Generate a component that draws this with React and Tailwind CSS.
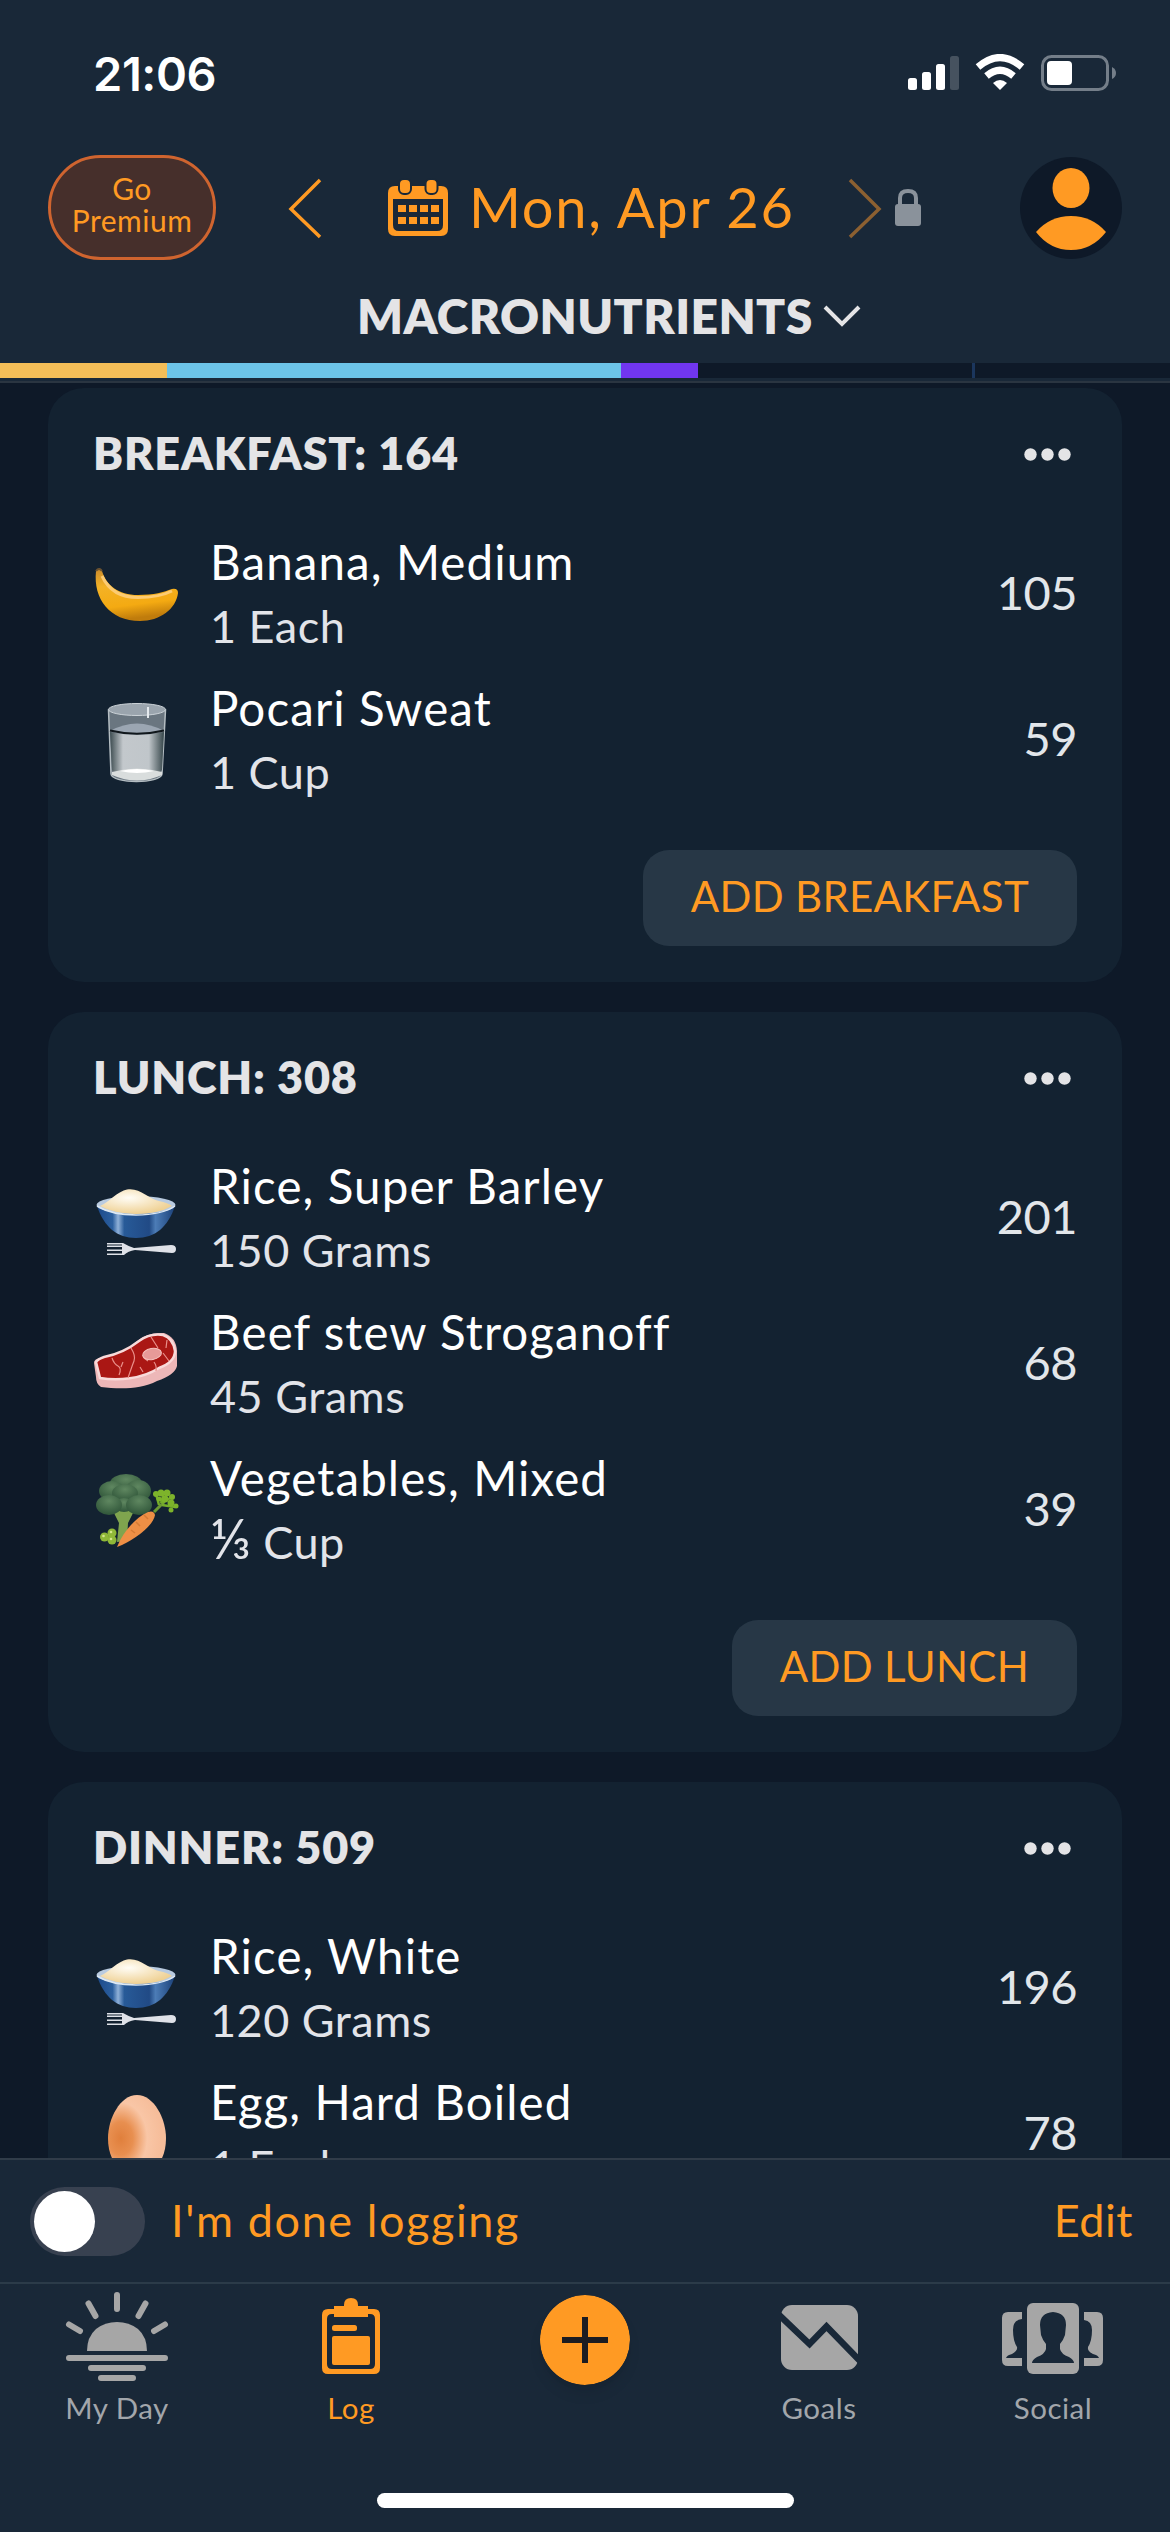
import React from "react";

const Banana = () => (
  <svg width="90" height="90" viewBox="0 0 90 90">
    <defs>
      <linearGradient id="banana" x1="0" y1="0" x2="0.2" y2="1">
        <stop offset="0" stopColor="#c98a2c" />
        <stop offset="0.35" stopColor="#f3b226" />
        <stop offset="0.75" stopColor="#f4aa12" />
        <stop offset="1" stopColor="#c07c0c" />
      </linearGradient>
    </defs>
    <path
      d="M4 22 Q8 17 10 22 C14 36 26 46 46 46 C62 46 72 43 80 40 Q86 39 86 44 C84 60 68 72 48 72 C18 72 1 50 4 22 Z"
      fill="url(#banana)"
    />
    <path
      d="M10 27 C16 40 27 48.500 46 48.500 C60 48.500 72 46 80 42"
      fill="none"
      stroke="#fccb72"
      strokeWidth="3"
    />
    <path d="M4 22 Q7 18 10 22" fill="none" stroke="#6b5230" strokeWidth="2" />
  </svg>
);

const Glass = () => (
  <svg width="90" height="90" viewBox="0 0 90 90">
    <defs>
      <linearGradient id="glass" x1="0" x2="1">
        <stop offset="0" stopColor="#3d4c50" />
        <stop offset="0.24" stopColor="#c3c8cc" />
        <stop offset="0.72" stopColor="#c0c6ca" />
        <stop offset="1" stopColor="#36464a" />
      </linearGradient>
    </defs>
    <path
      d="M16.500 15 L19 79 C20 89 69 89 70 79 L73.500 15 Z"
      fill="#6a7680"
      stroke="#b4bdc2"
      strokeWidth="1.5"
    />
    <ellipse cx="45" cy="14.5" rx="28.500" ry="6" fill="#9aa4ad" stroke="#ccd3d8" />
    <path d="M18 36 Q45 21 72 36 Q45 45 18 36 Z" fill="#9ba6b2" />
    <path d="M18 37 L20 75 C22 81 68 81 70 75 L72 37 Q45 43 18 37 Z" fill="url(#glass)" />
    <path d="M20 77 Q45 70 70 77 V80 Q45 91 20 80 Z" fill="#d9dddd" />
    <path d="M28 76 Q45 72 62 76 Q45 80 28 76 Z" fill="#fff" />
    <path d="M18 35.500 Q45 42 72 35.500" fill="none" stroke="#10171b" strokeWidth="2.200" />
    <path d="M56 12 V23" stroke="#e5eaee" strokeWidth="2" />
  </svg>
);

const Rice = () => (
  <svg width="90" height="90" viewBox="0 0 90 90">
    <defs>
      <linearGradient id="bowl" x1="0" x2="1">
        <stop offset="0" stopColor="#1d4a8a" />
        <stop offset="0.2" stopColor="#2b5f9f" />
        <stop offset="0.27" stopColor="#8fb0d8" />
        <stop offset="0.35" stopColor="#275a98" />
        <stop offset="0.67" stopColor="#214a85" />
        <stop offset="0.75" stopColor="#4c7cb6" />
        <stop offset="1" stopColor="#1b4179" />
      </linearGradient>
      <radialGradient id="rice" cx="0.4" cy="0.35" r="0.65">
        <stop offset="0" stopColor="#fffdf6" />
        <stop offset="1" stopColor="#efd194" />
      </radialGradient>
    </defs>
    <path d="M5 33 C12 54 25 65 44 65 C63 65 76 54 83 33 Z" fill="url(#bowl)" />
    <ellipse cx="44" cy="32" rx="39.5" ry="9" fill="#b9cbe0" />
    <path
      d="M8 33 C17 29 26 18 35 16.500 C47 14 57 26 67 28 Q76 30 80 33 Q66 41 44 41 Q20 40 8 33 Z"
      fill="url(#rice)"
    />
    <path d="M5 33 Q20 42 44 42 Q70 42 83 33" fill="none" stroke="#dce8f4" strokeWidth="1.5" />
    <path
      d="M15 70 H31 Q36 73 42 75 L79 72 Q84 72 84 76 Q84 80 80 80 L43 77 Q36 78 32 82 H15 V80.500 H30 V78 H15 V76.500 H30 V74 H15 V72.500 H30 V71.500 H15 Z"
      fill="#dfe2e8"
    />
  </svg>
);

const Steak = () => (
  <svg width="90" height="90" viewBox="0 0 90 90">
    <path
      d="M2 44 Q2 40 8 39 C24 37 33 32 44 23 Q55 13 72 14 Q84 18 85 32 V47 Q83 56 65 62 C48 71 26 70 9 68 Q4 65 4 58 Z"
      fill="#edb7b8"
    />
    <path
      d="M4 43 Q6 40 12 38 C28 35 38 29 47 22 Q58 14 71 16 Q81 19 83 32 Q83 43 67 49 C50 60 26 62 8 59 Z"
      fill="#aa1714"
      stroke="#f8dada"
      strokeWidth="2.500"
    />
    <path
      d="M20 39 Q22 45 26 47 T27 56 M39 29 Q44 37 42 42 T36 59 M59 18 L66 29 M62 43 Q65 47 64 52 M71 34 L77 42 M75 21 L74 29 M31 43 L29 48 M48 48 L51 53 M52 39 L56 42"
      fill="none"
      stroke="#e98f8a"
      strokeWidth="1.200"
    />
    <ellipse cx="60" cy="35" rx="9.500" ry="5.500" fill="#e79a98" stroke="#f5c3bf" transform="rotate(-10 60 35)" />
  </svg>
);

const Vegetables = () => (
  <svg width="90" height="90" viewBox="0 0 90 90">
    <defs>
      <radialGradient id="floret" cx="0.5" cy="0.3" r="0.7">
        <stop offset="0" stopColor="#5f8760" />
        <stop offset="1" stopColor="#2f5539" />
      </radialGradient>
    </defs>
    <path d="M21 46 L27 58 L25 77 L35 76 L36 58 L42 46 Z" fill="#7fa44e" />
    <g fill="url(#floret)">
      <ellipse cx="34" cy="18" rx="16" ry="9" />
      <ellipse cx="20" cy="26" rx="13" ry="10" />
      <ellipse cx="46" cy="26" rx="13" ry="11" />
      <ellipse cx="33" cy="28" rx="13" ry="9" />
      <ellipse cx="32" cy="40" rx="9" ry="7" />
      <ellipse cx="17" cy="40" rx="13" ry="10" />
      <ellipse cx="47" cy="40" rx="13" ry="10" />
    </g>
    <path d="M62 47 L72 37" stroke="#6c9a33" strokeWidth="3" />
    <path d="M67 40 L64 29 M69 38 L72 28 M70 38 L80 32 M70 40 L83 42" stroke="#75ad2a" strokeWidth="2.500" />
    <g fill="#7db32b">
      <circle cx="64" cy="29" r="3" />
      <circle cx="69" cy="28" r="3.500" />
      <circle cx="75" cy="28" r="3.500" />
      <circle cx="67" cy="34" r="2.500" />
      <circle cx="73" cy="34" r="3.500" />
      <circle cx="80" cy="32" r="3" />
      <circle cx="79" cy="38" r="3.500" />
      <circle cx="84" cy="41" r="2.500" />
      <circle cx="79" cy="45" r="2.500" />
    </g>
    <path d="M25 82 C31 67 43 53 56 47 Q62 45 63 50 C61 61 43 75 25 82 Z" fill="#ee8f45" />
    <path d="M52 50 l4 4 M44 57 l4 4 M39 65 l4 3" stroke="#d67b35" strokeWidth="1.500" />
    <g fill="#8fb838">
      <circle cx="12.500" cy="72" r="4.500" />
      <circle cx="20" cy="68" r="4.500" />
      <circle cx="20" cy="75" r="4.500" />
    </g>
    <g fill="#d3e68a">
      <circle cx="11.500" cy="71" r="1.300" />
      <circle cx="19" cy="67" r="1.300" />
      <circle cx="19" cy="74" r="1.300" />
    </g>
  </svg>
);

const Egg = () => (
  <svg width="90" height="90" viewBox="0 0 90 90">
    <defs>
      <radialGradient id="egg" cx="0.22" cy="0.55" r="0.7">
        <stop offset="0" stopColor="#e07f3c" />
        <stop offset="0.3" stopColor="#e88f50" />
        <stop offset="0.65" stopColor="#f9c6a6" />
        <stop offset="1" stopColor="#f6bd9a" />
      </radialGradient>
    </defs>
    <path d="M45 6 C62 6 74 30 74 49 C74 72 62 85 45 85 C28 85 16 72 16 49 C16 30 28 6 45 6 Z" fill="url(#egg)" />
  </svg>
);

const meals = [
  {
    title: "BREAKFAST: 164",
    button: "ADD BREAKFAST",
    items: [
      { name: "Banana, Medium", amount: "1 Each", calories: 105, Icon: Banana },
      { name: "Pocari Sweat", amount: "1 Cup", calories: 59, Icon: Glass },
    ],
  },
  {
    title: "LUNCH: 308",
    button: "ADD LUNCH",
    items: [
      { name: "Rice, Super Barley", amount: "150 Grams", calories: 201, Icon: Rice },
      { name: "Beef stew Stroganoff", amount: "45 Grams", calories: 68, Icon: Steak },
      { name: "Vegetables, Mixed", fraction: "⅓", amount: " Cup", calories: 39, Icon: Vegetables },
    ],
  },
  {
    title: "DINNER: 509",
    items: [
      { name: "Rice, White", amount: "120 Grams", calories: 196, Icon: Rice },
      { name: "Egg, Hard Boiled", amount: "1 Each", calories: 78, Icon: Egg },
    ],
  },
];

const StatusBar = () => (
  <div className="flex h-[147px] shrink-0 items-center justify-between pl-[93px] pr-[52px] pt-[5px]">
    <span className="pb-[4px] font-['Inter'] text-[47px] font-semibold tracking-[-0.4px] text-white">
      21:06
    </span>
    <svg width="210" height="44" viewBox="0 0 210 44" fill="#fff">
      <rect x="0" y="24" width="9" height="12" rx="2.500" />
      <rect x="14" y="18" width="9" height="18" rx="2.500" />
      <rect x="28" y="10" width="9" height="26" rx="2.500" />
      <rect x="42" y="2" width="9" height="34" rx="2.500" fill="#46525f" />
      <g fill="none" stroke="#fff" strokeWidth="7">
        <path d="M70 13 Q92 -6 114 13" />
        <path d="M78.500 22 Q92 10.500 105.500 22" />
      </g>
      <path d="M85 29 Q92 23 99 29 L92 36 Z" />
      <rect x="134.500" y="2.500" width="65" height="33" rx="9" fill="none" stroke="#747e89" strokeWidth="3" />
      <rect x="139" y="7" width="25" height="24" rx="4" />
      <path d="M204 13 Q208 15 208 19 T204 25 Z" fill="#747e89" />
    </svg>
  </div>
);

const Header = () => (
  <div className="flex h-[121px] shrink-0 items-center pl-[48px] pr-[48px]">
    <button className="flex h-[105px] w-[168px] flex-col items-center justify-center rounded-full border-[3px] border-[#cf642f] bg-[#462f2b] pb-[8px] text-[30px] leading-[32px] tracking-[0.5px] text-[#ff9a23]">
      <span>Go</span>
      <span>Premium</span>
    </button>
    <svg className="ml-[70px]" width="40" height="64" viewBox="0 0 40 64" fill="none" stroke="#ff9a23" strokeWidth="3.500">
      <path d="M34 4 L5 33 L34 61" />
    </svg>
    <svg className="ml-[62px]" width="60" height="60" viewBox="0 0 60 60">
      <path
        fillRule="evenodd"
        fill="#ff9a23"
        d="M7 8 H53 Q60 8 60 15 V51 Q60 58 53 58 H7 Q0 58 0 51 V15 Q0 8 7 8 Z M5 21 V47 Q5 53 11 53 H49 Q55 53 55 47 V21 Z"
      />
      <g fill="#ff9a23" stroke="#192838" strokeWidth="2">
        <rect x="11" y="1" width="12" height="15" rx="5" />
        <rect x="37.500" y="1" width="12" height="15" rx="5" />
      </g>
      <path
        fill="#ff9a23"
        d="M10 27h8v7h-8z M21 27h8v7h-8z M32 27h8v7h-8z M43 27h8v7h-8z M10 39h8v7h-8z M21 39h8v7h-8z M32 39h8v7h-8z M43 39h8v7h-8z"
      />
    </svg>
    <span className="ml-[21px] w-[326px] whitespace-nowrap pb-[2px] text-[56px] tracking-[1.7px] text-[#ff9a23]">
      Mon, Apr 26
    </span>
    <svg className="ml-[51px]" width="36" height="64" viewBox="0 0 36 64" fill="none" stroke="#8c6031" strokeWidth="3.500">
      <path d="M4 4 L33 33 L4 61" />
    </svg>
    <svg className="ml-[13px]" width="26" height="38" viewBox="0 0 26 38">
      <path d="M5 17 V9 Q5 2 13 2 T21 9 V17" fill="none" stroke="#8a929b" strokeWidth="4" />
      <rect y="15" width="26" height="22" rx="3" fill="#8a929b" />
    </svg>
    <svg className="ml-auto" width="102" height="102" viewBox="0 0 102 102">
      <circle cx="51" cy="51" r="51" fill="#0e1928" />
      <ellipse cx="51" cy="31" rx="18.500" ry="20" fill="#ff9a23" />
      <path d="M16 75 Q30 59 51 59 T86 75 Q72 93 51 93 T16 75 Z" fill="#ff9a23" />
    </svg>
  </div>
);

const MacroBar = () => (
  <div className="h-[20px] shrink-0 border-b-2 border-[#2a3541] bg-[#192838]">
    <div className="flex h-[15px] bg-[#0e1928]">
      <div className="w-[167px] bg-[#f4be58]" />
      <div className="w-[454px] bg-[#6cc4e8]" />
      <div className="w-[77px] bg-[#7136f0]" />
      <div className="ml-[274px] w-[3px] bg-[#1b365d]" />
    </div>
  </div>
);

const FoodItem = ({ item }) => {
  const { Icon } = item;
  return (
    <div className="flex h-[146px] items-center">
      <Icon />
      <div className="ml-[28px] flex flex-col whitespace-nowrap">
        <p className="text-[47.5px] leading-[64px] tracking-[1.1px] text-white">{item.name}</p>
        <p className="text-[45px] leading-[64px] tracking-[0.5px] text-[#e2e4e9]">
          {item.fraction && <span className="text-[56px] leading-none">{item.fraction}</span>}
          {item.amount}
        </p>
      </div>
      <span className="mb-[4px] ml-auto text-[47px] leading-[40px] tracking-[-0.5px] text-[#e2e6ea]">
        {item.calories}
      </span>
    </div>
  );
};

const MealCard = ({ meal }) => (
  <div className="mx-[48px] mb-[30px] shrink-0 rounded-[36px] bg-[#132231] pb-[36px] pl-[44px] pr-[45px]">
    <div className="flex h-[133px] items-center justify-between pl-[1px] pr-[6px]">
      <h2 className="pb-[2px] text-[45px] font-extrabold tracking-[0.8px] text-[#e4e4e6]">{meal.title}</h2>
      <svg width="47" height="13" viewBox="0 0 47 13" fill="#e4e4e6">
        <circle cx="6.500" cy="6.500" r="6.200" />
        <circle cx="23.500" cy="6.500" r="6.200" />
        <circle cx="40.500" cy="6.500" r="6.200" />
      </svg>
    </div>
    {meal.items.map((item) => (
      <FoodItem key={item.name} item={item} />
    ))}
    {meal.button && (
      <div className="mt-[37px] flex justify-end">
        <button className="h-[96px] rounded-[26px] bg-[#273746] px-[48px] pb-[3px] text-[42px] tracking-[0.3px] text-[#ff9a23]">
          {meal.button}
        </button>
      </div>
    )}
  </div>
);

const MyDayIcon = () => (
  <svg width="104" height="94" viewBox="0 0 104 94" fill="#a6a6a6" stroke="#a6a6a6" strokeWidth="6" strokeLinecap="round">
    <path d="M52 8 V22 M23.500 16.500 L30.500 29 M80.500 16.500 L73.500 29 M4 37.500 L15 44 M100 37.500 L89 44 M4 71 H100 M26 81 H78 M36 91 H68" />
    <path stroke="none" d="M22 64 Q22 50 31 42 Q40 35 52 35 T73 42 Q82 50 82 64 Z" />
  </svg>
);

const LogIcon = () => (
  <svg width="58" height="94" viewBox="0 0 58 94" fill="#ff9a23">
    <path
      fillRule="evenodd"
      d="M6 22 H52 Q58 22 58 28 V81 Q58 87 52 87 H6 Q0 87 0 81 V28 Q0 22 6 22 Z M10 27 Q5 27 5 32 V77 Q5 82 10 82 H48 Q53 82 53 77 V32 Q53 27 48 27 Z"
    />
    <path d="M12 19 H22 V18 Q22 11 29 11 T36 18 V19 H46 V30 H12 Z" />
    <rect x="10" y="38" width="25" height="6" rx="2.500" />
    <rect x="10" y="49" width="38" height="29" rx="2" />
  </svg>
);

const GoalsIcon = () => (
  <svg width="77" height="94" viewBox="0 0 77 94">
    <rect y="18" width="77" height="65" rx="11" fill="#a6a6a6" />
    <path d="M-5 25 L28.500 57 L45.500 39.500 L82 77" fill="none" stroke="#192838" strokeWidth="6.500" />
  </svg>
);

const SocialIcon = () => (
  <svg width="104" height="94" viewBox="0 0 104 94" fill="#a6a6a6">
    <path d="M21 25 H7 Q1 25 1 31 V73 Q1 79 7 79 H21 V71 H5 Q6 68 11 67 Q17 64 16 60 Q12 54 12 43 Q12 33 21 32 Z" />
    <path d="M83 25 H96 Q102 25 102 31 V73 Q102 79 96 79 H83 V71 H98 Q97 68 92 67 Q86 64 87 60 Q91 54 91 43 Q91 34 83 33 Z" />
    <rect x="26" y="16" width="52" height="71" rx="6" />
    <path
      fill="#192838"
      d="M52 25 Q65 26 65 38 L64 48 Q62 54 59 57 V62 Q60 67 68 70 Q73 73 73 76 H31 Q31 73 36 70 Q44 67 45 62 V57 Q42 54 40 48 L39 38 Q39 26 52 25 Z"
    />
  </svg>
);

const Tab = ({ label, active, children }) => (
  <div
    className={`flex flex-1 flex-col items-center pt-[3px] text-[29.5px] tracking-[0.5px] ${
      active ? "text-[#ff9a23]" : "text-[#a2a6ab]"
    }`}
  >
    {children}
    <span className="mt-[9px] leading-[36px]">{label}</span>
  </div>
);

const App = () => {
  return (
    <div className="flex h-[2532px] w-[1170px] flex-col overflow-hidden bg-[#192838] font-['Lato',sans-serif]">
      <StatusBar />
      <Header />
      <div className="flex h-[95px] shrink-0 items-center pl-[357px]">
        <h1 className="w-[455px] whitespace-nowrap text-[48px] font-extrabold tracking-[0.4px] text-[#e4e4e6]">
          MACRONUTRIENTS
        </h1>
        <svg className="ml-[11px]" width="38" height="24" viewBox="0 0 38 24" fill="none" stroke="#e4e4e6" strokeWidth="4">
          <path d="M2 3 L19 20 L36 3" />
        </svg>
      </div>
      <MacroBar />

      {/* Diary */}
      <div className="flex min-h-0 flex-1 flex-col overflow-hidden bg-[#0e1928] pt-[5px]">
        {meals.map((meal) => (
          <MealCard key={meal.title} meal={meal} />
        ))}
      </div>

      <div className="flex h-[124px] shrink-0 items-center border-t-2 border-[#303c49] pl-[30px] pr-[37px] text-[45px] text-[#ff9a23]">
        <div className="flex h-[69px] w-[115px] items-center rounded-full bg-[#384150] p-[4px]">
          <div className="size-[61px] rounded-full bg-white" />
        </div>
        <span className="ml-[26px] pb-[1px] tracking-[1.6px]">I'm done logging</span>
        <span className="ml-auto pb-[1px] tracking-[0.5px]">Edit</span>
      </div>

      {/* Tab bar */}
      <div className="flex h-[250px] shrink-0 flex-col border-t-2 border-[#2b3b49]">
        <div className="flex flex-1">
          <Tab label="My Day">
            <MyDayIcon />
          </Tab>
          <Tab label="Log" active>
            <LogIcon />
          </Tab>
          <div className="flex flex-1 justify-center pt-[11px]">
            <svg className="rounded-full shadow-lg" width="90" height="90" viewBox="0 0 90 90">
              <circle cx="45" cy="45" r="45" fill="#ff9a23" />
              <path d="M22 45 H68 M45 22 V68" stroke="#1b1c22" strokeWidth="6" />
            </svg>
          </div>
          <Tab label="Goals">
            <GoalsIcon />
          </Tab>
          <Tab label="Social">
            <SocialIcon />
          </Tab>
        </div>
        <div className="mx-auto mb-[24px] h-[15px] w-[417px] rounded-full bg-white" />
      </div>
    </div>
  );
};

export default App;
